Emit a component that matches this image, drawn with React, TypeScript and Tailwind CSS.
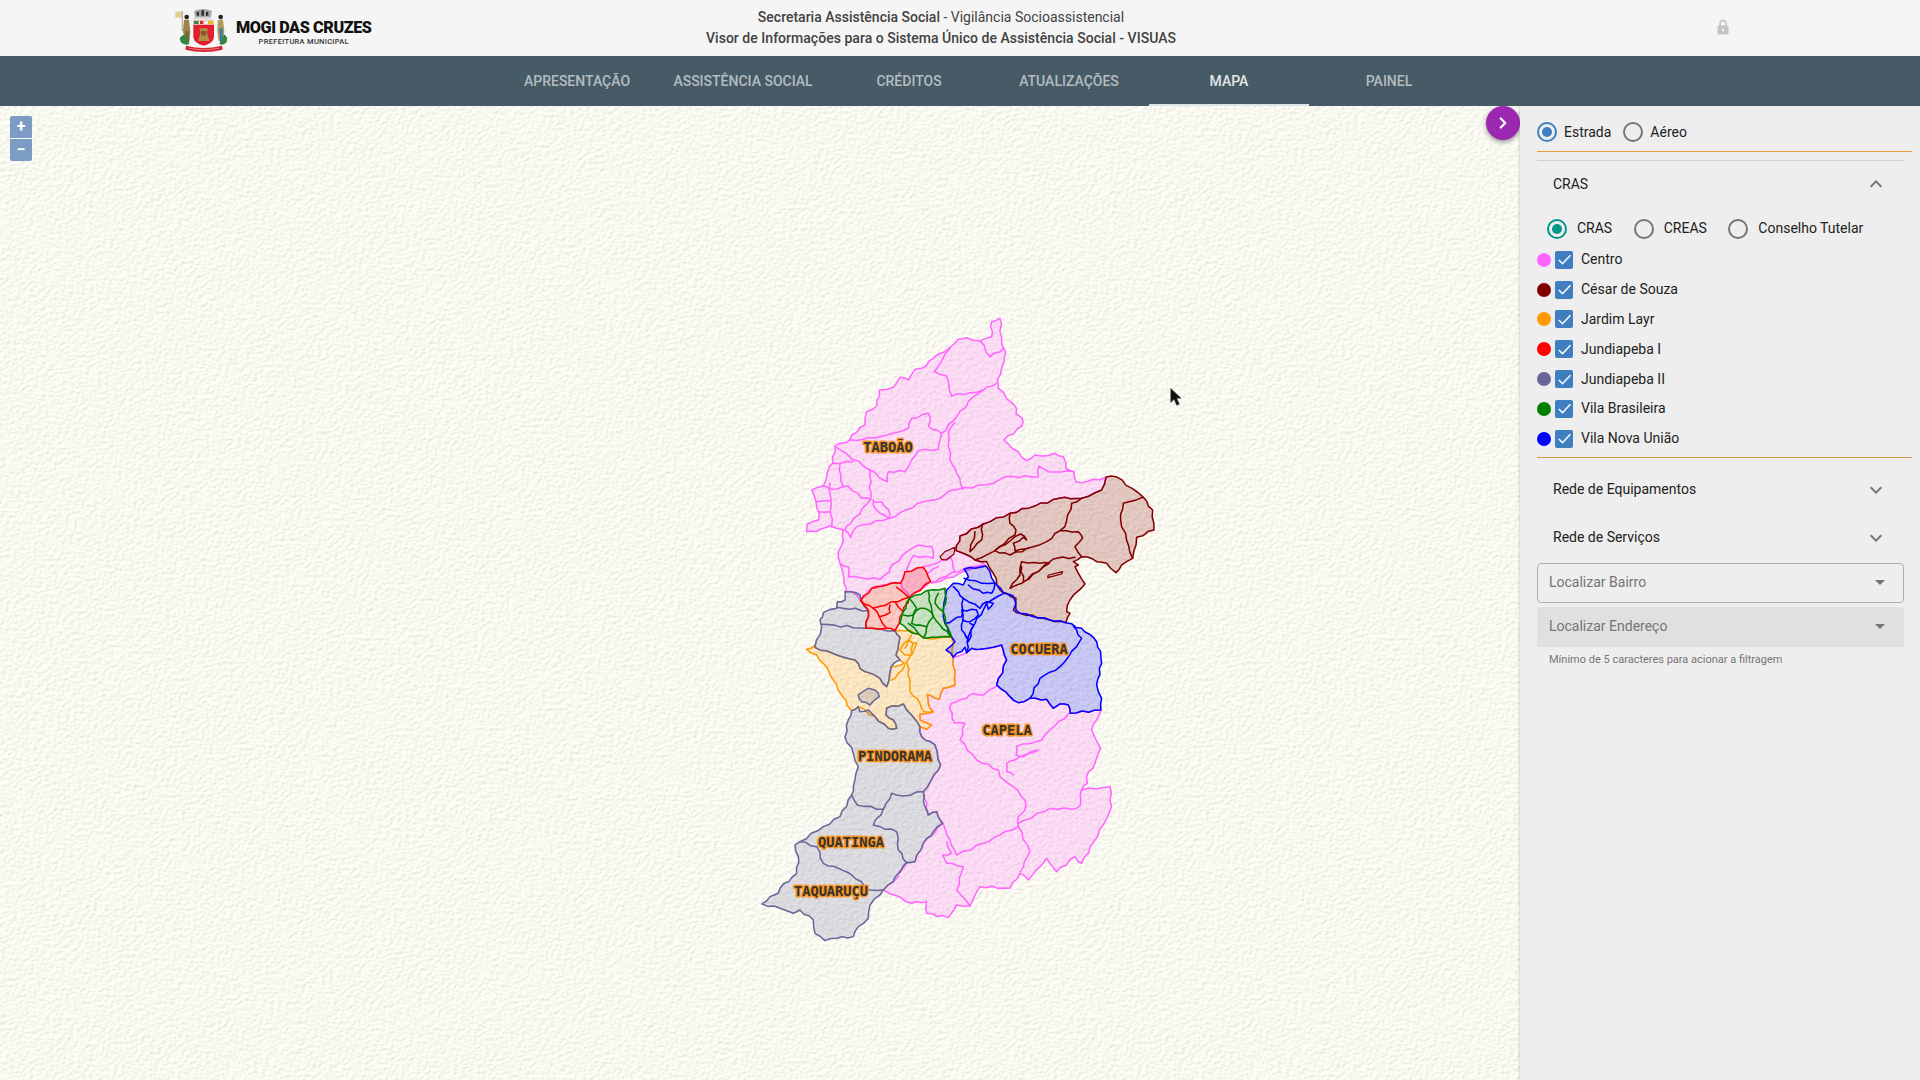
import { ChevronRight } from "lucide-react";

const FONT = "font-['Roboto',sans-serif]";

const tabs = [
  { label: "Apresentação", w: "w-[160px]" },
  { label: "Assistência Social", w: "w-[172px]" },
  { label: "Créditos", w: "w-[160px]" },
  { label: "Atualizações", w: "w-[160px]" },
  { label: "Mapa", w: "w-[160px]", active: true },
  { label: "Painel", w: "w-[160px]" },
];

const regions = [
  { name: "Centro", color: "bg-[#ff66ff]" },
  { name: "César de Souza", color: "bg-[#800000]" },
  { name: "Jardim Layr", color: "bg-[#ff9900]" },
  { name: "Jundiapeba I", color: "bg-[#ff0000]" },
  { name: "Jundiapeba II", color: "bg-[#666699]" },
  { name: "Vila Brasileira", color: "bg-[#008000]" },
  { name: "Vila Nova União", color: "bg-[#0000ff]" },
];

// map shapes, traced in 3x crop coordinates
const PINK = "#ff66ff";
const MAROON = "#800000";
const BLUE = "#0000ff";
const GREEN = "#008000";
const RED = "#ff0000";
const ORANGE = "#ff9900";
const GRAY = "#666699";

const northOuter =
  "660,55 665,130 677,155 665,205 652,240 655,265 710,325 708,342 727,355 726,378 672,420 740,482 765,465 785,468 825,460 850,470 858,505 882,515 888,545 905,548 978,532 965,570 905,595 838,595 690,640 610,672 540,708 528,752 555,762 585,780 615,795 555,805 618,798 560,812 480,845 452,845 388,892 362,850 345,848 320,855 275,865 242,902 215,875 195,875 200,870 180,790 175,755 190,720 190,690 150,678 130,685 110,695 80,695 82,672 115,660 118,640 108,605 95,570 130,558 148,500 158,490 165,437 210,420 215,405 255,375 260,335 290,318 298,270 340,262 360,232 385,240 405,208 425,205 460,175 510,143 535,118 560,113 600,122 635,110 635,65";

const northLines = [
  "165,440 270,510 310,540 322,545 325,515 375,515 395,480 415,452 475,448 485,400 530,350 580,290 610,270 650,250",
  "210,420 250,418 300,410 340,400 385,385 395,355 445,340 450,365 445,378 485,400",
  "510,145 462,215 500,228 515,288 570,278 610,270",
  "600,122 630,170 672,145",
  "525,368 505,395 510,480 530,520 550,568",
  "195,690 212,712 230,680 328,655 430,605 480,595 510,572 640,550 675,530 775,530 777,498 805,515 882,515",
  "158,490 220,485",
  "180,495 182,540 190,560 205,558 245,595 272,598 270,510",
  "272,598 212,670 195,690",
  "150,550 155,680",
  "108,605 150,602",
  "118,635 150,635",
  "130,558 150,568 190,560",
  "280,600 285,625 300,640 328,655 325,628 305,605 280,605",
  "180,790 205,800 205,830 300,838 330,815 328,808 380,755 415,735 455,740 460,775 400,767 380,810",
  "555,805 480,835 455,850",
  "510,770 525,815",
  "430,800 470,790 510,770",
  "445,820 475,800",
];

const brownOuter =
  "978,532 1008,530 1088,590 1118,630 1122,690 1070,712 1058,775 1040,785 1025,795 1008,818 980,790 950,785 940,778 905,770 880,785 895,795 885,800 915,852 870,900 860,935 870,940 858,968 810,960 720,940 700,930 708,895 680,880 660,870 640,820 620,785 585,780 555,762 528,752 540,708 610,672 690,640 838,595 905,595 965,570";

const brownLines = [
  "905,595 875,610 855,680 840,692 800,725 760,740 705,752 700,730 730,712 740,720 722,702 645,752 690,765 760,740",
  "1088,592 1030,610 1022,660 1040,720 1058,775",
  "840,692 895,695 908,715 885,740 905,770",
  "690,640 690,670 708,690 705,705 640,755 585,780",
  "608,672 605,720 570,755 585,695",
  "885,772 830,775 810,785 725,850 690,865 720,825 725,785 780,790 808,790 775,815 730,845 725,800",
];

const brownSmall = [
  "480,770 495,755 525,742 522,762 500,780 485,778",
  "805,825 848,815 845,822 815,830 803,833",
];

const blueOuter =
  "618,18 645,70 672,100 700,108 708,150 720,160 810,180 858,188 905,205 940,232 962,275 965,310 950,375 965,415 963,450 870,460 865,435 840,432 820,445 800,418 750,415 715,428 690,410 650,375 680,300 665,255 640,262 600,268 575,265 560,278 555,262 520,292 498,270 525,245 515,232 495,190 490,150 500,90 520,70 550,75 565,50 552,28";

const blueLines = [
  "880,198 905,235 890,260 840,320 780,355 750,415",
  "672,100 620,130 610,150 585,190 565,230 560,278",
  "552,55 605,70 645,70",
  "565,75 610,100 635,100 645,70",
  "550,115 600,145 620,125 640,130 625,148 620,130",
  "545,150 590,150 595,165 570,185 548,180 545,150",
  "550,115 545,170 520,180 495,190",
  "520,80 535,95 550,115",
  "550,180 545,210 560,235",
  "570,190 580,195 565,245 555,225",
];

const greenOuter =
  "388,115 440,92 495,85 497,130 490,155 497,190 515,230 470,232 440,235 415,222 385,212 360,190 368,158";

const greenLines = [
  "445,95 447,120 460,170 480,195 510,228",
  "475,100 465,130 490,155",
  "400,165 420,145 445,150 460,170 440,200 430,235",
  "370,165 400,165 395,190 420,195 440,200",
  "385,190 415,220",
  "388,115 410,145 400,165",
];

const redOuter =
  "242,122 275,85 320,75 345,68 362,70 375,35 430,22 452,65 388,112 368,158 358,190 345,212 320,205 258,205 265,150";

const redLines = [
  "242,122 280,145 388,112",
  "350,82 385,112",
  "280,145 298,170 330,158 330,135",
  "298,170 320,205",
  "345,125 370,155",
];

const orangeOuter =
  "80,268 105,255 105,262 170,285 225,300 240,325 300,355 320,380 335,318 345,320 372,310 360,300 348,285 360,232 345,212 390,210 415,222 440,235 515,232 520,292 525,375 490,385 478,418 465,415 442,405 445,430 460,455 420,462 420,480 455,495 440,508 420,500 370,432 320,445 318,465 340,480 350,505 325,505 285,470 235,440 215,452 175,390 145,330 110,285";

const orangeLines = [
  "375,315 345,355 335,360",
  "380,310 390,360 390,395 420,430 432,455 460,455",
  "395,225 360,270 375,285 395,285 410,250 385,240 375,265",
  "400,250 395,280 378,310",
];

const grayTop =
  "195,95 215,95 240,105 245,125 265,150 258,205 345,212 360,232 348,285 360,300 335,318 320,380 300,355 240,325 225,300 170,285 105,262 125,200 120,180 130,158 170,145 172,125 195,120";

const graySouth =
  "215,452 235,440 240,455 265,450 285,470 325,505 350,505 340,480 318,465 320,445 370,432 420,500 425,530 465,555 482,615 475,630 430,695 435,740 445,765 470,755 488,790 460,815 430,850 405,905 380,908 350,945 340,965 310,990 300,1005 270,1035 265,1075 235,1100 220,1130 170,1135 135,1142 105,1120 100,1080 60,1050 40,1060 0,1045 -54,1032 -30,1010 -5,1000 0,985 50,940 55,890 45,855 60,845 130,800 180,770 215,705 220,680 235,620 220,580 195,530 205,480";

const grayLines = [
  "170,142 265,152",
  "125,193 258,205",
  "215,705 232,735 310,748 335,700 370,708 430,695",
  "310,748 280,795 350,815 355,870 380,908",
  "60,845 110,860 130,910 175,925 215,945 270,990 310,990",
];

const grayHole = "235,405 265,385 285,390 298,410 270,435 245,425";

const capelaOuter =
  "560,278 575,265 600,268 640,262 665,255 680,300 650,375 690,410 715,428 750,415 800,418 820,445 840,432 865,435 870,460 963,450 935,510 962,565 945,610 920,650 922,670 905,690 990,680 995,740 970,795 905,910 885,890 830,935 800,895 780,920 745,960 720,940 690,985 600,980 570,1038 530,1035 505,1073 440,1060 440,1025 395,1030 310,990 340,965 380,908 405,905 430,850 488,790 470,755 445,765 430,695 475,630 482,615 465,555 425,530 420,500 440,508 455,495 420,480 420,462 460,455 445,430 442,405 465,415 478,418 490,385 525,375 520,292";

const capelaLines = [
  "650,378 610,405 580,400 560,415 515,430 508,445 525,490 555,490 540,540 590,600 655,630 660,650 700,680 735,720 735,750 715,770 715,800 750,875 720,935",
  "865,462 810,510 785,540 710,560 708,585 730,590 775,570 720,590 680,610 680,635 700,645",
  "715,790 810,745 875,748 900,738 905,690",
  "715,800 660,825 610,850 530,885 510,840 488,790",
  "500,845 515,880 488,885 500,910 550,920 530,990 570,1038",
];

const labels = [
  { text: "TABOÃO", x: 888, y: 452 },
  { text: "COCUERA", x: 1039, y: 654 },
  { text: "CAPELA", x: 1007, y: 735 },
  { text: "PINDORAMA", x: 895, y: 761 },
  { text: "QUATINGA", x: 851, y: 847 },
  { text: "TAQUARUÇU", x: 831, y: 896 },
];

// borders in the picture are wobbly; break long edges up the same way whichever
// direction they are walked, so neighbouring areas still share their border
function rough(points: string) {
  const pts = points.split(" ").map((p) => p.split(",").map(Number));
  const out: string[] = [];
  pts.forEach(([x, y], i) => {
    out.push(`${x},${y}`);
    const next = pts[i + 1];
    if (!next) return;
    const [nx, ny] = next;
    const len = Math.hypot(nx - x, ny - y);
    const steps = Math.floor(len / 22);
    const sign = x < nx || (x === nx && y < ny) ? 1 : -1;
    const seed = x + nx + (y + ny) * 7;
    for (let s = 1; s <= steps; s++) {
      const k = sign > 0 ? s : steps + 1 - s;
      const t = s / (steps + 1);
      const off = Math.sin(seed * 0.73 + k * 2.4) * 3.2 * sign;
      const px = x + (nx - x) * t - ((ny - y) / len) * off;
      const py = y + (ny - y) * t + ((nx - x) / len) * off;
      out.push(`${px.toFixed(1)},${py.toFixed(1)}`);
    }
  });
  return out.join(" ");
}

function Area({ outer, lines, color, opacity = 0.2 }: { outer: string; lines: string[]; color: string; opacity?: number }) {
  const closed = outer + " " + outer.split(" ")[0];
  return (
    <g stroke={color} strokeWidth={4.6} strokeLinejoin="round" strokeLinecap="round">
      <polygon points={rough(closed)} fill={color} fillOpacity={opacity} />
      {lines.map((points, i) => (
        <polyline key={i} points={rough(points)} fill="none" />
      ))}
    </g>
  );
}

function MapDrawing() {
  return (
    <svg viewBox="0 106 1520 974" className="absolute inset-0 w-full h-full">
      <defs>
        <filter id="paper" x="0" y="0" width="100%" height="100%">
          <feTurbulence type="fractalNoise" baseFrequency="0.25 0.3" numOctaves={3} seed={4} result="noise" />
          <feDiffuseLighting in="noise" lightingColor="#fbfaf2" surfaceScale={0.7} diffuseConstant={1.1}>
            <feDistantLight azimuth={235} elevation={64} />
          </feDiffuseLighting>
        </filter>
      </defs>
      <rect x={0} y={106} width={1520} height={974} filter="url(#paper)" />

      <g transform="translate(780 300) scale(0.3333)">
        <Area outer={northOuter} lines={northLines} color={PINK} />
        <Area outer={brownOuter} lines={brownLines} color={MAROON} />
        {brownSmall.map((points, i) => (
          <polygon key={i} points={points} fill={MAROON} fillOpacity={0.1} stroke={MAROON} strokeWidth={3.6} strokeLinejoin="round" />
        ))}
      </g>
      <g transform="translate(780 560) scale(0.3333)">
        <Area outer={capelaOuter} lines={capelaLines} color={PINK} />
        <Area outer={orangeOuter} lines={orangeLines} color={ORANGE} />
        <Area outer={grayTop} lines={[]} color={GRAY} />
        <Area outer={graySouth} lines={grayLines} color={GRAY} />
        <Area outer={grayHole} lines={[]} color={GRAY} />
        <Area outer={redOuter} lines={redLines} color={RED} />
        <Area outer={blueOuter} lines={blueLines} color={BLUE} />
        <Area outer={greenOuter} lines={greenLines} color={GREEN} />
      </g>

      {labels.map((l) => (
        <text
          key={l.text}
          x={l.x}
          y={l.y}
          textAnchor="middle"
          fill="#333333"
          stroke="#f7931e"
          strokeWidth={3}
          strokeLinejoin="round"
          paintOrder="stroke"
          className="font-['DejaVu_Sans_Mono',monospace] font-bold text-[13.7px]"
        >
          {l.text}
        </text>
      ))}

      {/* mouse pointer */}
      <path d="M1170.5 388 L1170.5 403 L1174 399.6 L1176.6 405.5 L1179.6 404.2 L1177 398.6 L1181.5 398.4 Z" fill="#111111" stroke="#999999" strokeWidth={0.6} />
    </svg>
  );
}

function Crest() {
  return (
    <svg viewBox="0 0 198 153" className="w-[66px] h-[51px] shrink-0 mt-[5px]">
      {/* flag */}
      <rect x="10" y="20" width="20" height="18" fill="#e3d08c" />
      <path d="M31 18v60" stroke="#8a7a4a" strokeWidth="2" />
      {/* crown */}
      <path d="M70 38 66 18q28-12 54 0l-4 20z" fill="#a7a9a8" />
      <path d="M74 20h7v12h-7zM88 16h8v16h-8zM102 20h7v12h-7z" fill="#333333" />
      <path d="M66 36h52v7H66z" fill="#d9d9d9" />
      {/* men */}
      <circle cx="44" cy="36" r="7" fill="#222222" />
      <path d="M36 44h15l4 36-3 28H38l-5-30z" fill="#9d8448" />
      <path d="M40 78h10l2 36H42z" fill="#70693f" />
      <circle cx="146" cy="36" r="7" fill="#222222" />
      <path d="M138 44h15l4 34-4 30h-13l-4-30z" fill="#b29a5b" />
      <path d="M142 70h10l1 44h-9z" fill="#3f7ea3" />
      {/* shield */}
      <path d="M64 46h62v50q-2 20-31 26-29-6-31-26z" fill="#e21f2c" />
      <path d="M64 46h62v13H64z" fill="#f3f0e4" />
      <path d="M66 48h14v9H66z" fill="#2f8a3f" />
      <path d="M84 48h10v9H84z" fill="#d92631" />
      <path d="M108 48h16v9h-16z" fill="#e4bf24" />
      <path d="M82 70h26l-3 12 7 26H78l8-26z" fill="#b58c45" />
      <path d="M88 78h14v14H88z" fill="#7a5a2c" />
      {/* leaves */}
      <path d="M26 112q-4-16 12-24 4 14 14 30-16 4-26-6z" fill="#2f8a3f" />
      <path d="M164 112q4-16-8-24-4 14-14 30 14 4 22-6z" fill="#2f8a3f" />
      <path d="M32 92q-6 4-8 12M158 92q6 4 6 12" stroke="#1f6b2d" strokeWidth="3" fill="none" />
      {/* ribbon */}
      <path d="M42 122q52 14 108 0l2 12q-56 14-112 0z" fill="#d9232f" />
      <path d="M52 130q44 8 88 0" stroke="#f3d9d9" strokeWidth="2" fill="none" strokeDasharray="4 2" />
    </svg>
  );
}

function Header() {
  return (
    <header className="flex h-[56px] shrink-0 bg-[#f5f5f5]">
      <div className="flex w-[582px] shrink-0 pl-[172px]">
        <Crest />
        <div className="-ml-[2px] flex flex-col items-center pt-[19px]">
          <span className="text-[16.2px] leading-[17px] font-black tracking-[-0.42px] text-[#111111]">MOGI DAS CRUZES</span>
          <span className="mt-[1px] text-[7.5px] leading-[10px] font-medium tracking-[0.3px] text-[#333333]">PREFEITURA MUNICIPAL</span>
        </div>
      </div>
      <div className="flex w-[718px] shrink-0 flex-col items-center pt-[7px] text-[14px] leading-[21px] text-[#424242]">
        <p>
          <span className="font-medium">Secretaria Assistência Social</span> - Vigilância Socioassistencial
        </p>
        <p className="font-medium tracking-[0.03px]">Visor de Informações para o Sistema Único de Assistência Social - VISUAS</p>
      </div>
      <div className="flex flex-1 items-start pl-[417px] pt-[19px]">
        <svg viewBox="0 0 12 16" className="w-[12px] h-[16px]">
          <path d="M3 7V4.4a3 3 0 0 1 6 0V7" fill="none" stroke="#c4c4c4" strokeWidth="1.6" />
          <rect x="0.5" y="6.5" width="11" height="9" rx="1" fill="#c4c4c4" />
          <rect x="5" y="10" width="2" height="2" fill="#f5f5f5" />
        </svg>
      </div>
    </header>
  );
}

function Nav() {
  return (
    <nav className="flex h-[50px] shrink-0 bg-[#475b66] pl-[497px]">
      {tabs.map((t) => (
        <div
          key={t.label}
          className={`flex h-full items-center justify-center border-b-2 pt-[3px] text-[14px] font-medium uppercase ${t.w} ${
            t.active ? "border-[#dbe3e6] text-white/85" : "border-transparent text-white/60"
          }`}
        >
          {t.label}
        </div>
      ))}
    </nav>
  );
}

function Radio({ label, on, tone, gap = "gap-[7px]" }: { label: string; on?: boolean; tone?: "blue" | "teal"; gap?: string }) {
  const ring = !on ? "border-[#757575]" : tone === "teal" ? "border-[#009688]" : "border-[#3f7fbf]";
  const dot = tone === "teal" ? "bg-[#009688]" : "bg-[#3f7fbf]";
  return (
    <div className={`flex items-center ${gap}`}>
      <span className={`flex size-[20px] items-center justify-center rounded-full border-2 ${ring}`}>
        {on && <span className={`size-[10px] rounded-full ${dot}`} />}
      </span>
      <span className="text-[14px] text-[#212121]">{label}</span>
    </div>
  );
}

function Accordion({ title, open, h }: { title: string; open?: boolean; h: string }) {
  return (
    <div className={`flex items-center justify-between pl-4 pr-4 text-[14px] text-[#212121] ${h}`}>
      <span>{title}</span>
      <svg viewBox="0 0 24 24" className={`size-[24px] fill-[#757575] ${open ? "rotate-180" : ""}`}>
        <path d="M16.59 8.59 12 13.17 7.41 8.59 6 10l6 6 6-6z" />
      </svg>
    </div>
  );
}

function Sidebar() {
  return (
    <aside className="z-10 flex w-[400px] shrink-0 flex-col bg-[#eeeeee] pl-[17px] pr-2 shadow-[-1px_0_2px_rgba(0,0,0,0.15)]">
      <div className="flex h-[45px] items-center gap-[12px] pt-[7px]">
        <Radio label="Estrada" on tone="blue" />
        <Radio label="Aéreo" />
      </div>
      <div className="h-px bg-[#ee9a3c]" />
      <div className="mr-2 mt-2 h-px bg-[#cfcfcf]" />

      <div className="w-[367px]">
        <Accordion title="CRAS" open h="mt-px h-[44px]" />
        <div className="flex h-[39px] items-center gap-[21.5px] pl-[10px] pt-[6px]">
          <Radio label="CRAS" on tone="teal" gap="gap-[10px]" />
          <Radio label="CREAS" gap="gap-[10px]" />
          <Radio label="Conselho Tutelar" gap="gap-[10px]" />
        </div>
        {regions.map((r) => (
          <div key={r.name} className="flex h-[29.8px] items-center">
            <span className={`size-[14px] rounded-full ${r.color}`} />
            <span className="ml-1 flex size-[18px] items-center justify-center rounded-[2px] bg-[#3f7fbf]">
              <svg viewBox="0 0 24 24" className="size-[15px]">
                <path d="M3 12.9 8.8 18.7 21.5 5.2" fill="none" stroke="white" strokeWidth="2.4" />
              </svg>
            </span>
            <span className="ml-2 text-[14px] text-[#212121]">{r.name}</span>
          </div>
        ))}
      </div>

      <div className="mt-[3px] h-px bg-[#d99a45]" />

      <div className="mt-[8px] w-[367px]">
        <Accordion title="Rede de Equipamentos" h="h-[48px]" />
        <Accordion title="Rede de Serviços" h="h-[48px]" />

        <div className="mt-px flex h-[40px] items-center justify-between rounded border border-[#b0b0b0] pl-[11px] pr-[18px] text-[14px] text-[#757575]">
          <span>Localizar Bairro</span>
          <span className="border-x-[5px] border-t-[5px] border-x-transparent border-t-[#757575]" />
        </div>
        <div className="mt-1 flex h-[40px] items-center justify-between rounded-t bg-[#e0e0e0] pl-3 pr-[19px] text-[14px] text-[#757575]">
          <span>Localizar Endereço</span>
          <span className="border-x-[5px] border-t-[5px] border-x-transparent border-t-[#757575]" />
        </div>
        <p className="mt-[6px] pl-3 text-[11px] leading-[14px] text-[#757575]">Mínimo de 5 caracteres para acionar a filtragem</p>
      </div>
    </aside>
  );
}

export default function App() {
  return (
    <div className={`flex h-screen w-full flex-col overflow-hidden ${FONT}`}>
      <Header />
      <Nav />
      <main className="flex min-h-0 flex-1">
        <div className="relative flex-1 overflow-hidden bg-[#f6f5ee]">
          <MapDrawing />
          {/* zoom control */}
          <div className="absolute left-[10px] top-[10px] flex flex-col gap-px">
            <button className="flex h-[22px] w-[22px] items-center justify-center rounded-t-[2px] bg-[#7c9cc6] text-[16px] leading-none font-bold text-white">+</button>
            <button className="flex h-[22px] w-[22px] items-center justify-center rounded-b-[2px] bg-[#7c9cc6] text-[16px] leading-none font-bold text-white">−</button>
          </div>
          <button className="absolute right-0 top-0 flex size-[34px] items-center justify-center rounded-full bg-[#9c27b0] text-white shadow-[0_2px_5px_rgba(0,0,0,0.4)]">
            <ChevronRight size={18} strokeWidth={3} />
          </button>
        </div>
        <Sidebar />
      </main>
    </div>
  );
}
